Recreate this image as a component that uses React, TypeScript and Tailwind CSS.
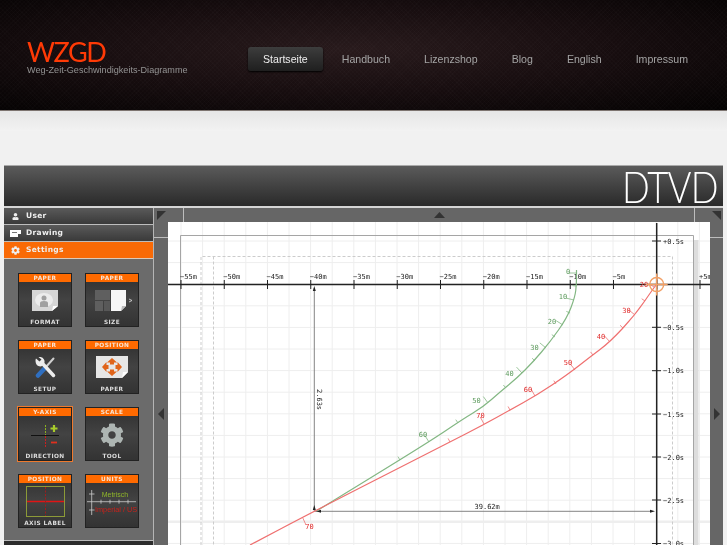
import { FaCog, FaUser } from 'react-icons/fa';

const nav = ['Startseite', 'Handbuch', 'Lizenzshop', 'Blog', 'English', 'Impressum'];

const range = (n: number) => Array.from({ length: n }, (_, i) => i);

type Pt = [number, number];

// x ticks every 5m, y ticks every 0.5s
const xTicks = ['−55m', '−50m', '−45m', '−40m', '−35m', '−30m', '−25m', '−20m', '−15m', '−10m', '−5m', '', '+5m'];
const yTicks: [number, string][] = [
  [241, '+0.5s'], [327.3, '−0.5s'], [370.7, '−1.0s'], [414, '−1.5s'],
  [457, '−2.0s'], [500, '−2.5s'], [543.5, '−3.0s'],
];

const green: Pt[] = [
  [576.5, 270], [576.5, 284], [575, 297], [567, 318], [550, 342], [533, 362], [517, 378],
  [500, 392], [483, 407], [463, 419], [429, 442], [316.5, 511],
];
const red: Pt[] = [
  [656.5, 284.5], [653, 289], [635, 315], [610, 342], [590, 357], [567, 375],
  [537, 395], [510, 410], [483, 425], [450, 442], [316.5, 510], [250, 545],
];

// on-curve point and tick length
const greenTicks: [number, number, number][] = [
  [576.5, 273, 8], [576.5, 286, 4], [574, 300, 8], [570, 313, 4], [563, 325, 8], [555, 337, 4], [546, 348, 8],
  [535, 361, 4], [522, 373, 8], [506, 388, 4], [488, 403, 8], [458, 423, 4], [429, 442, 8], [400, 460, 4],
];
const redTicks: [number, number, number][] = [
  [654, 287, 4], [645, 301, 4], [635, 315, 8], [623, 328, 4], [610, 342, 8], [593, 355, 4], [575, 370, 8],
  [556, 384, 4], [535, 396, 8], [510, 410, 4], [484, 424, 8], [450, 442, 4],
];

const greenLabels: [number, number, string][] = [
  [568, 274, '0'], [563, 299, '10'], [552, 324, '20'], [534.5, 350, '30'], [509.5, 376, '40'], [476.5, 402.5, '50'], [423, 437, '60'],
];
const redLabels: [number, number, string][] = [
  [644, 287, '20'], [626.5, 312.5, '30'], [601, 339, '40'], [568, 365, '50'], [528, 391.5, '60'], [480.5, 417.5, '70'], [309.5, 528.5, '70'],
];

function smooth(pts: Pt[]) {
  const mid = (a: Pt, b: Pt) => `${(a[0] + b[0]) / 2} ${(a[1] + b[1]) / 2}`;
  let d = `M${pts[0][0]} ${pts[0][1]}L${mid(pts[0], pts[1])}`;
  for (let i = 1; i < pts.length - 1; i++) {
    d += `Q${pts[i][0]} ${pts[i][1]} ${mid(pts[i], pts[i + 1])}`;
  }
  return d + `L${pts[pts.length - 1][0]} ${pts[pts.length - 1][1]}`;
}

// ticks stand on the upper-left side, square to the line through their neighbours
function tickLines(ticks: [number, number, number][]) {
  return ticks.map(([x, y, len], i) => {
    const a = ticks[Math.max(i - 1, 0)];
    const b = ticks[Math.min(i + 1, ticks.length - 1)];
    const dx = b[0] - a[0];
    const dy = b[1] - a[1];
    const l = Math.hypot(dx, dy);
    return <line key={i} x1={x} y1={y} x2={x + (-dy / l) * len} y2={y + (dx / l) * len} />;
  });
}

function Chart() {
  return (
    <svg viewBox="168 222 542 368" className="block w-[542px] h-[368px] shrink-0 bg-white">
      {/* grid */}
      <g stroke="#eeeeee" strokeWidth="1">
        {range(26).map((i) => (
          <line key={i} x1={181 + i * 21.6} y1="222" x2={181 + i * 21.6} y2="590" />
        ))}
        {range(16).map((i) => (
          <line key={i} x1="168" y1={241 + i * 21.6} x2="710" y2={241 + i * 21.6} />
        ))}
      </g>
      <rect x="168" y="520.5" width="542" height="2.5" fill="#eeeeee" />

      {/* paper outline and margins */}
      <rect x="693.5" y="240" width="5" height="350" fill="#dddddd" />
      <path d="M180.5 590V235.5H693.5V590" fill="none" stroke="#a5a5a5" strokeWidth="1" />
      <path d="M201 590V256.5H672.5V590M213.5 256.5V590" fill="none" stroke="#cccccc" strokeWidth="1" strokeDasharray="3 2" />

      {/* axes */}
      <line x1="168" y1="284.500" x2="710" y2="284.500" stroke="#222222" strokeWidth="1.500" />
      <line x1="656.700" y1="223" x2="656.700" y2="590" stroke="#222222" strokeWidth="1.500" />
      <g stroke="#222222" strokeWidth="1">
        {xTicks.map((t, i) => (
          <line key={i} x1={181 + i * 43.25} y1="280" x2={181 + i * 43.25} y2="289" />
        ))}
        {yTicks.map(([y]) => (
          <line key={y} x1="652" y1={y} x2="661" y2={y} />
        ))}
      </g>
      <g fontFamily="'DejaVu Sans Mono', monospace" fontSize="7" fill="#222222">
        {xTicks.map((t, i) => (
          <text key={i} x={180 + i * 43.25} y="278.500">{t}</text>
        ))}
        {yTicks.map(([y, t]) => (
          <text key={y} x="663" y={y + 2.5}>{t}</text>
        ))}
        <text x="474.500" y="509">39.62m</text>
        <text transform="translate(316.500 389) rotate(90)">2.63s</text>
      </g>

      {/* dimension lines */}
      <g stroke="#777777" strokeWidth="0.900">
        <line x1="314.300" y1="288" x2="314.300" y2="511" />
        <line x1="314.300" y1="511.300" x2="652" y2="511.300" />
      </g>
      <path d="M314.300 286l-1.500 5h3zM655 511.300l-5-1.500v3zM316 511.300l5-1.500v3zM314.300 505l-1.500 5h3z" fill="#222222" />

      {/* curves */}
      <g fill="none" strokeWidth="1.200">
        <path d={smooth(green)} stroke="#83b783" />
        <path d={smooth(red)} stroke="#ef7070" />
      </g>
      <g stroke="#83b783" strokeWidth="0.800">{tickLines(greenTicks)}</g>
      <g stroke="#ef7070" strokeWidth="0.800">
        {tickLines(redTicks)}
        <line x1="302.700" y1="517.700" x2="306" y2="525" />
      </g>
      <g fontFamily="'DejaVu Sans Mono', monospace" fontSize="7" textAnchor="middle">
        {greenLabels.map(([x, y, t]) => (
          <text key={t} x={x} y={y} fill="#5c9a5c">{t}</text>
        ))}
        {redLabels.map(([x, y, t]) => (
          <text key={x} x={x} y={y} fill="#e02a2a">{t}</text>
        ))}
      </g>

      {/* origin marker */}
      <g fill="none" stroke="#f2a066" strokeWidth="1.400">
        <circle cx="656.700" cy="284.500" r="7" />
        <path d="M656.700 273.500v22M645.700 284.500h22" />
      </g>
    </svg>
  );
}

function FormatIcon() {
  return (
    <svg width="26" height="21" viewBox="0 0 26 21">
      <path d="M0 0h26v16l-6 5H0z" fill="#d6d6d6" />
      <ellipse cx="12" cy="10" rx="9" ry="7" fill="#ececec" />
      <path d="M20 21l1-5h5z" fill="#fff" />
      <circle cx="12" cy="8" r="2.500" fill="#a0a0a0" />
      <path d="M8 17v-4q0-2 4-2t4 2v4z" fill="#a0a0a0" />
    </svg>
  );
}

function SizeIcon() {
  return (
    <svg width="37" height="21" viewBox="0 0 37 21" className="ml-[3px]">
      <rect x="0" y="0" width="15" height="10" fill="#5f5f5f" />
      <rect x="0" y="11" width="8" height="10" fill="#5f5f5f" />
      <rect x="9" y="11" width="6" height="10" fill="#585858" />
      <path d="M16 0h15v16l-5 5H16z" fill="#f6f6f6" />
      <path d="M26 21l1-5h4z" fill="#bbb" />
      <path d="M34 9l3 1.500-3 1.500" fill="none" stroke="#ddd" strokeWidth="0.800" />
    </svg>
  );
}

function SetupIcon() {
  return (
    <svg width="21" height="21" viewBox="0 0 21 21">
      <path d="M18.500 1.500L10 11" stroke="#cfcfcf" strokeWidth="2" strokeLinecap="round" />
      <path d="M9.500 11.500L3 18.500" stroke="#2f6fc0" strokeWidth="4.500" strokeLinecap="round" />
      <path d="M18.500 18.500L7 6" stroke="#ececec" strokeWidth="3.500" strokeLinecap="round" />
      <path d="M1 1.500l3.500 3 2-2L3.500 0q4-.5 5.500 2.500t-1 5.500l-2 1.500q-4 0-5-3T1 1.500z" fill="#ececec" />
    </svg>
  );
}

function PositionIcon() {
  return (
    <svg width="32" height="22" viewBox="0 0 32 22">
      <path d="M0 0h32v16l-6 6H0z" fill="#e6e6e6" />
      <path d="M26 22l1-6h5z" fill="#fff" />
      <g fill="#e0641a">
        <path d="M16 2l5 4.500h-3v2h-4v-2h-3z" />
        <path d="M16 20l5-4.500h-3v-2h-4v2h-3z" />
        <path d="M6 11l4.500-5v3h2v4h-2v3z" />
        <path d="M26 11l-4.500-5v3h-2v4h2v3z" />
      </g>
    </svg>
  );
}

function DirectionIcon() {
  return (
    <svg width="28" height="22" viewBox="0 0 28 22" className="mt-[3px]">
      <line x1="0" y1="10.500" x2="28" y2="10.500" stroke="#111" strokeWidth="1" />
      <line x1="14.500" y1="0" x2="14.500" y2="10" stroke="#8cb11f" strokeWidth="1" strokeDasharray="2 1" />
      <line x1="14.500" y1="11" x2="14.500" y2="22" stroke="#c92020" strokeWidth="1" strokeDasharray="2 1" />
      <path d="M19.500 3.500h7M23 0v7" stroke="#a8cc2b" strokeWidth="2.200" />
      <path d="M20 17.500h6" stroke="#e0301e" strokeWidth="1.800" />
    </svg>
  );
}

function AxisLabelIcon() {
  return (
    <svg width="39" height="31" viewBox="0 0 39 31">
      <rect x="0.500" y="0.500" width="38" height="30" fill="none" stroke="#8c9a38" strokeWidth="1" />
      <line x1="1" y1="15.500" x2="38" y2="15.500" stroke="#e01515" strokeWidth="1.400" />
      <line x1="19.500" y1="1" x2="19.500" y2="30" stroke="#a01c1c" strokeWidth="1" strokeDasharray="2 1.500" />
    </svg>
  );
}

function UnitsIcon() {
  return (
    <svg width="50" height="26" viewBox="0 0 50 26" className="mb-[6px]">
      <path d="M4.700 1v25M0 12.700h49" stroke="#cccccc" strokeWidth="0.800" />
      <path d="M2 5h5.500M2 21h5.500M14 10.700v4M23 10.700v4M32 10.700v4M41 10.700v4" stroke="#cccccc" strokeWidth="0.800" />
      <text x="14.700" y="7.500" fontSize="7" fill="#8fb52a" fontFamily="'Liberation Sans', sans-serif">Metrisch</text>
      <text x="8" y="22.500" fontSize="7.300" fill="#c9211a" fontFamily="'Liberation Sans', sans-serif">Imperial / US</text>
    </svg>
  );
}

type Tile = { top: string; bottom?: string; icon: React.ReactNode; active?: boolean };

const tiles: Tile[] = [
  { top: 'PAPER', bottom: 'FORMAT', icon: <FormatIcon /> },
  { top: 'PAPER', bottom: 'SIZE', icon: <SizeIcon /> },
  { top: 'PAPER', bottom: 'SETUP', icon: <SetupIcon /> },
  { top: 'POSITION', bottom: 'PAPER', icon: <PositionIcon /> },
  { top: 'Y-AXIS', bottom: 'DIRECTION', icon: <DirectionIcon />, active: true },
  { top: 'SCALE', bottom: 'TOOL', icon: <FaCog className="text-[#adb5b2] text-[24px] mt-[2px]" /> },
  { top: 'POSITION', bottom: 'AXIS LABEL', icon: <AxisLabelIcon /> },
  { top: 'UNITS', icon: <UnitsIcon /> },
];

function TileCard({ tile }: { tile: Tile }) {
  return (
    <div
      className={
        tile.active
          ? 'w-[54px] h-[54px] flex flex-col bg-gradient-to-b from-[#2f2f2f] via-[#434343] to-[#333] outline-[1.5px] outline-solid outline-[#ee7a2e] border border-[#222]'
          : 'w-[54px] h-[54px] flex flex-col bg-gradient-to-b from-[#2f2f2f] via-[#434343] to-[#333] border border-[#222]'
      }
    >
      <div className="h-[8px] bg-[#ff6a00] text-[#f8e4d4] text-[5.8px] leading-[8px] text-center font-bold tracking-[0.4px]">
        {tile.top}
      </div>
      <div className="flex-1 min-h-0 flex items-center justify-center">{tile.icon}</div>
      {tile.bottom && (
        <div className="h-[8px] text-[#dddddd] text-[5.8px] leading-[8px] text-center font-bold tracking-[0.4px]">
          {tile.bottom}
        </div>
      )}
    </div>
  );
}

function Sidebar() {
  return (
    <div className="w-[149px] shrink-0 flex flex-col bg-[#6b6b6b] font-['DejaVu_Sans',sans-serif]">
      <div className="h-[17px] flex items-center bg-gradient-to-b from-[#5a5a5a] to-[#3a3a3a] border-b border-[#bdbdbd] text-[#eeeeee] text-[7.5px] font-bold tracking-[0.3px]">
        <span className="w-[22px] flex justify-center"><FaUser className="w-[7px] h-[7px]" /></span>
        User
      </div>
      <div className="h-[17px] flex items-center bg-gradient-to-b from-[#5a5a5a] to-[#3a3a3a] border-b border-[#bdbdbd] text-[#eeeeee] text-[7.5px] font-bold tracking-[0.3px]">
        <span className="w-[22px] flex justify-center">
          <svg width="11" height="7" viewBox="0 0 11 7">
            <path d="M0 0h11v4H8v3H0z" fill="#fff" />
            <path d="M2 2h5v1H2z" fill="#777" />
          </svg>
        </span>
        Drawing
      </div>
      <div className="h-[17px] flex items-center bg-[#f96a06] border-b border-[#dcc9b8] text-[#eeeeee] text-[7.5px] font-bold tracking-[0.3px]">
        <span className="w-[22px] flex justify-center"><FaCog className="w-[9px] h-[9px]" /></span>
        Settings
      </div>
      <div className="grid grid-cols-[54px_54px] content-start gap-[13px] pl-[14px] pt-[14px] h-[282px] border-b border-[#bbb]">
        {tiles.map((t) => (
          <TileCard key={t.top + t.bottom} tile={t} />
        ))}
      </div>
      <div className="flex-1 bg-[#2c2c2c]" />
    </div>
  );
}

export default function App() {
  return (
    <div className="h-[545px] overflow-hidden bg-[#f1f1f1] blur-[0.35px] font-['Liberation_Sans',sans-serif]">
      <header className="h-[111px] flex bg-[repeating-linear-gradient(45deg,rgba(255,255,255,0.012)_0_1px,transparent_1px_3px),repeating-linear-gradient(-45deg,rgba(255,255,255,0.012)_0_1px,transparent_1px_3px),radial-gradient(ellipse_at_48%_45%,#281a1c_0%,#170d0f_50%,#040202_100%)] border-b border-[#7d7470]">
        <div className="w-[248px] pl-[27px] pt-[37px] shrink-0">
          <div className="h-[29px] text-[#ff3a06] text-[27px] leading-[29px] tracking-[-1.4px] font-['Lato',sans-serif]">WZGD</div>
          <div className="text-[#939393] text-[9.1px] leading-[9px]">Weg-Zeit-Geschwindigkeits-Diagramme</div>
        </div>
        <nav className="flex gap-[4px] pt-[47px] items-start">
          {nav.map((n, i) => (
            <a
              key={n}
              className={
                i === 0
                  ? 'h-[24px] px-[15px] rounded-[3px] leading-[24px] text-[10.6px] text-[#eeeeee] bg-gradient-to-b from-[#3d3d3d] to-[#1f1f1f] shadow-[0_1px_2px_#000]'
                  : 'h-[24px] px-[15px] leading-[24px] text-[10.6px] text-[#a4a4a4]'
              }
            >
              {n}
            </a>
          ))}
        </nav>
      </header>

      <div className="h-[20px] bg-gradient-to-b from-[#e6e6e6] to-[#f2f2f2]" />

      <section className="mx-[4px] mt-[34px]">
        <div className="h-[41px] flex justify-end items-center pr-[5px] bg-gradient-to-b from-[#5b5b5b] to-[#2a2a2a] border-t border-[#aaa] text-white text-[43px] tracking-[-1px] font-['Lato',sans-serif] font-light leading-none">
          <span className="scale-x-[0.85] origin-right">DTVD</span>
        </div>
        <div className="h-[384px] flex border-t-2 border-[#d5d5d5]">
          <Sidebar />
          <div className="flex-1 flex flex-col border-l border-[#b5b5b5]">
            <div className="h-[14px] flex bg-[#666]">
              <div className="w-[30px] flex items-start pl-[3px] pt-[3px] border-r border-[#bdbdbd]">
                <svg width="9" height="9" viewBox="0 0 9 9"><path d="M0 0h9L0 9z" fill="#333" /></svg>
              </div>
              <div className="flex-1 flex items-center justify-center">
                <svg width="11" height="6" viewBox="0 0 11 6"><path d="M5.500 0L11 6H0z" fill="#333" /></svg>
              </div>
              <div className="w-[29px] flex justify-end pr-[2px] pt-[3px] border-l border-[#bdbdbd]">
                <svg width="9" height="9" viewBox="0 0 9 9"><path d="M0 0h9v9z" fill="#333" /></svg>
              </div>
            </div>
            <div className="flex-1 min-h-0 flex">
              <div className="w-[14px] flex flex-col bg-[#666]">
                <div className="h-[16px] border-b border-[#bdbdbd]" />
                <div className="flex-1 flex items-center justify-center">
                  <svg width="6" height="12" viewBox="0 0 6 12"><path d="M0 6L6 0v12z" fill="#333" /></svg>
                </div>
              </div>
              <Chart />
              <div className="flex-1 flex flex-col bg-[#666]">
                <div className="h-[16px] border-b border-[#bdbdbd]" />
                <div className="flex-1 flex items-center justify-center">
                  <svg width="6" height="12" viewBox="0 0 6 12"><path d="M6 6L0 0v12z" fill="#333" /></svg>
                </div>
              </div>
            </div>
          </div>
        </div>
      </section>
    </div>
  );
}
